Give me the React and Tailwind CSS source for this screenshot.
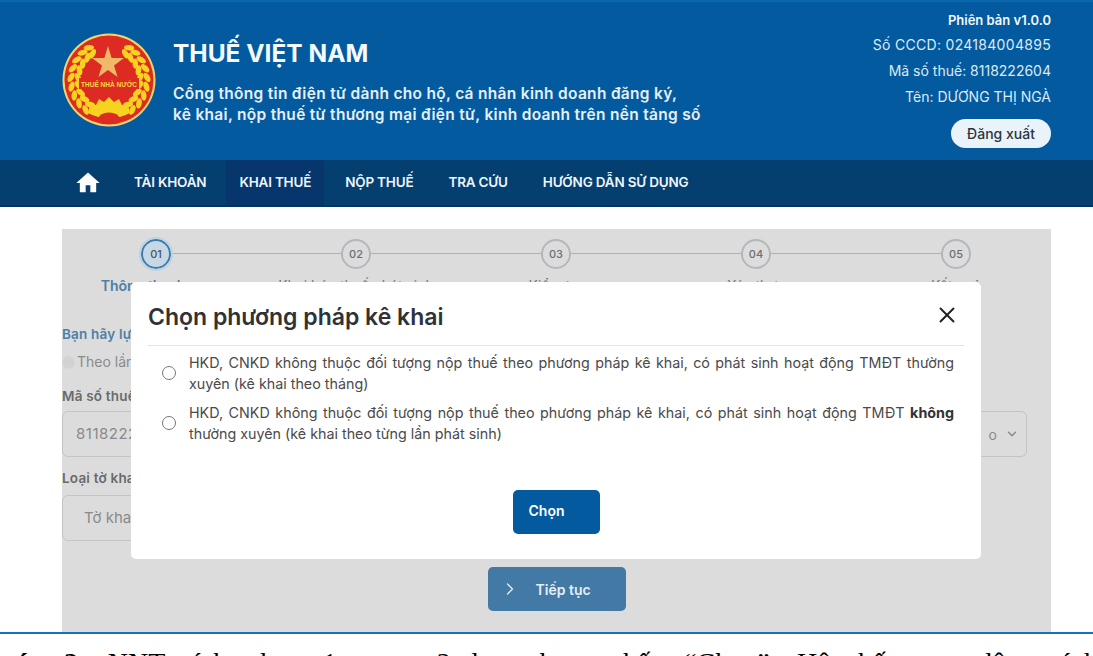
import { X, ChevronRight, ChevronDown } from 'lucide-react';
import { MdHome } from 'react-icons/md';

const STEPS = [
  { no: '01', label: 'Thông tin chung' },
  { no: '02', label: 'Khai báo thuế phát sinh' },
  { no: '03', label: 'Kiểm tra' },
  { no: '04', label: 'Xác thực' },
  { no: '05', label: 'Kết quả' },
];

const MENU = ['TÀI KHOẢN', 'KHAI THUẾ', 'NỘP THUẾ', 'TRA CỨU', 'HƯỚNG DẪN SỬ DỤNG'];

function Logo() {
  // hai bông lúa chạy từ đáy lên đỉnh huy hiệu
  const angles = [128, 142, 156, 170, 184, 198, 212, 226, 238];
  return (
    <svg viewBox="0 0 94 94" className="w-[94px] h-[94px] shrink-0">
      <circle cx="47" cy="47" r="46.5" fill="#f3d568" />
      <circle cx="47" cy="47" r="44.5" fill="#dd2a22" />
      {angles.map((a) => {
        const rad = (Math.PI / 180) * a;
        const rows = [
          { r: 31, tilt: -28 },
          { r: 38, tilt: 28 },
        ];
        return rows.map(({ r, tilt }) => {
          const x = 47 + r * Math.cos(rad);
          const y = 47 + r * Math.sin(rad);
          return (
            <g key={`${a}-${r}`}>
              <ellipse cx={x} cy={y} rx="5.2" ry="2.8" fill="#f7d321" transform={`rotate(${a + 90 + tilt} ${x} ${y})`} />
              <ellipse cx={94 - x} cy={y} rx="5.2" ry="2.8" fill="#f7d321" transform={`rotate(${-(a + 90 + tilt)} ${94 - x} ${y})`} />
            </g>
          );
        });
      })}
      <rect x="17" y="45" width="60" height="11" fill="#dd2a22" />
      <polygon
        points="46,13 49.6,25 62,25 52,32.5 55.6,44 46,37 36.4,44 40,32.5 30,25 42.4,25"
        fill="#f1b967"
      />
      <text x="47" y="54" textAnchor="middle" fontSize="7" fontWeight="700" fill="#f8dc45" textLength="56" lengthAdjust="spacingAndGlyphs" fontFamily="Liberation Sans, sans-serif">
        THUẾ NHÀ NƯỚC
      </text>
      <path d="M26 80 L28 71 L34 72 L37 66 L42 69 L47 64 L52 69 L57 66 L60 72 L66 71 L68 80 A44 44 0 0 1 26 80Z" fill="#f7d321" />
      <path d="M35 87 A13 12 0 0 1 59 87 A44 44 0 0 1 35 87Z" fill="#dd2a22" />
    </svg>
  );
}

function Header() {
  return (
    <header className="h-[160px] bg-[#045a9f] border-t-2 border-[#0a67ae] flex justify-between pl-[62px] pr-[42px] text-white">
      <div className="flex items-start gap-[17px] pt-[31px]">
        <Logo />
        <div className="pt-[3px]">
          <h1 className="text-[24.5px] leading-[34px] font-bold text-[#f4fafe]">THUẾ VIỆT NAM</h1>
          <p className="mt-[13px] text-[15.5px] leading-[21px] font-semibold tracking-[0.3px] text-[#e4f0f8]">
            Cổng thông tin điện tử dành cho hộ, cá nhân kinh doanh đăng ký,
            <br />
            kê khai, nộp thuế từ thương mại điện tử, kinh doanh trên nền tảng số
          </p>
        </div>
      </div>
      <div className="flex flex-col items-end pt-[8px] text-[14px] leading-[26px] text-[#dcebf5]">
        <div className="font-semibold text-[13px] text-[#f2f8fc] leading-[20px]">Phiên bản v1.0.0</div>
        <div className="leading-[27px] mt-[1px] tracking-[0.3px]">Số CCCD: 024184004895</div>
        <div>Mã số thuế: 8118222604</div>
        <div>Tên: DƯƠNG THỊ NGÀ</div>
        <button className="mt-[9px] w-[100px] h-[29px] rounded-full bg-[#eaf3fa] text-[#2c3440] text-[14px] font-medium">
          Đăng xuất
        </button>
      </div>
    </header>
  );
}

function Nav() {
  return (
    <nav className="h-[47px] bg-[#053f70] border-b-2 border-[#03345e] flex items-stretch pl-[74px] text-[#eef5fa] text-[13.5px] font-semibold tracking-[-0.2px]">
      <div className="flex items-center w-[60px]">
        <MdHome size={28} color="#ffffff" />
      </div>
      {MENU.map((m, i) => (
        <div
          key={m}
          className={
            i === 1
              ? 'flex items-center px-[13px] bg-[#07366c] mr-[21px]'
              : i === 0
                ? 'flex items-center mr-[20px]'
                : 'flex items-center mr-[35px]'
          }
        >
          {m}
        </div>
      ))}
    </nav>
  );
}

function Stepper() {
  return (
    <div className="relative grid grid-cols-5 pt-[10px] w-[1000px] -ml-[6px]">
      <div className="absolute left-[100px] right-[100px] top-[24px] h-[1px] bg-[#aeb2b5]" />
      {STEPS.map((s, i) => (
        <div key={s.no} className="relative flex flex-col items-center">
          <div
            className={
              i === 0
                ? 'w-[30px] h-[30px] rounded-full border-[2px] border-[#3d7ca9] bg-[#c6d8e6] outline-2 outline-[#bcd3e4] flex items-center justify-center text-[11px] font-medium text-[#4a5560]'
                : 'w-[30px] h-[30px] rounded-full border-[2px] border-[#b4b8bb] bg-[#dcdcdc] flex items-center justify-center text-[11px] font-medium text-[#6a6f73]'
            }
          >
            {s.no}
          </div>
          <div className={i === 0 ? 'mt-[6px] text-[14px] font-semibold text-[#4c80a6]' : 'mt-[6px] text-[14px] text-[#777]'}>
            {s.label}
          </div>
        </div>
      ))}
    </div>
  );
}

function BehindForm() {
  return (
    <div className="mt-[29px] pr-[24px] text-[#777]">
      <div className="text-[13.5px] leading-[18px] font-semibold tracking-[0.2px] text-[#4c80a6]">Bạn hãy lựa chọn</div>
      <div className="mt-[10px] flex items-center gap-[2px] text-[14px] leading-[18px] text-[#8a8a8a]">
        <span className="w-[13px] h-[13px] rounded-full bg-[#d2d2d2] border border-[#d6d6d6]" />
        Theo lần phát sinh
      </div>
      <div className="mt-[16px] text-[13.5px] leading-[18px] font-semibold tracking-[0.2px] text-[#6a6a6a]">Mã số thuế</div>
      <div className="mt-[6px] grid grid-cols-[1fr_200px] gap-[20px]">
        <div className="h-[46px] rounded-[6px] border border-[#c4c4c4] flex items-center pl-[13px] text-[15px] tracking-[0.5px] text-[#8a8a8a]">
          8118222604
        </div>
        <div className="h-[46px] rounded-[6px] border border-[#c4c4c4] flex items-center justify-end pr-[7px] gap-[8px] text-[14px] text-[#8a8a8a]">
          o
          <ChevronDown size={14} strokeWidth={2.5} />
        </div>
      </div>
      <div className="mt-[12px] text-[13.5px] leading-[18px] font-semibold tracking-[0.2px] text-[#6a6a6a]">Loại tờ khai</div>
      <div className="mt-[8px] w-[300px] h-[46px] rounded-[6px] border border-[#c4c4c4] flex items-center pl-[21px] text-[15px] text-[#8a8a8a]">
        Tờ khai
      </div>
      <div className="mt-[26px] flex justify-center pl-[24px]">
        <button className="w-[138px] h-[44px] rounded-[5px] bg-[#4379a5] text-[#e6eef5] text-[14px] font-semibold flex items-center pl-[12px] gap-[16px]">
          <ChevronRight size={20} strokeWidth={1.5} />
          Tiếp tục
        </button>
      </div>
    </div>
  );
}

function Option({ children }) {
  return (
    <label className="flex items-center gap-[13px] pl-[31px] pr-[27px]">
      <span className="w-[14px] h-[14px] rounded-full border border-[#777] bg-white shrink-0" />
      <span className="text-[14.3px] leading-[21px] text-[#4a4a4a] text-justify">{children}</span>
    </label>
  );
}

function Modal() {
  return (
    <div className="absolute left-[69px] top-[53px] w-[850px] h-[277px] bg-white rounded-[5px] flex flex-col">
      <div className="mx-[17px] h-[64px] flex items-center justify-between border-b border-[#e4e4e4] pt-[8px] pr-[4px]">
        <h2 className="text-[23px] font-semibold text-[#2f3338]">Chọn phương pháp kê khai</h2>
        <X size={26} strokeWidth={1.8} className="text-[#222] mb-[6px]" />
      </div>
      <div className="mt-[6px] flex flex-col gap-[8px]">
        <Option>
          HKD, CNKD không thuộc đối tượng nộp thuế theo phương pháp kê khai, có phát sinh hoạt động TMĐT thường xuyên (kê khai theo tháng)
        </Option>
        <Option>
          HKD, CNKD không thuộc đối tượng nộp thuế theo phương pháp kê khai, có phát sinh hoạt động TMĐT <b className="font-bold text-[#333]">không</b> thường xuyên (kê khai theo từng lần phát sinh)
        </Option>
      </div>
      <div className="mt-auto mb-[25px] flex justify-center">
        <button className="w-[87px] h-[44px] rounded-[5px] bg-[#045a9f] text-white text-[14px] font-semibold text-left pl-[16px] pb-[4px]">
          Chọn
        </button>
      </div>
    </div>
  );
}

export default function App() {
  return (
    <div className="w-[1093px] h-[656px] overflow-hidden bg-white font-['Inter','Noto_Sans',sans-serif]">
      <Header />
      <Nav />
      <main className="h-[425px] pl-[62px] pr-[42px] pt-[22px]">
        <div className="relative h-[403px] bg-[#dcdcdc] overflow-hidden">
          <Stepper />
          <BehindForm />
          <Modal />
        </div>
      </main>
      <div className="border-t-2 border-[#1272bd] whitespace-nowrap -ml-[20px] pt-[15px] font-['Liberation_Serif',serif] text-[28px] leading-[28px] [word-spacing:13.5px] text-black">
        <b>Bước 2:</b> NNT tích chọn 1 trong 2 lựa chọn, nhấn “Chọn”. Hệ thống tự động tính
      </div>
    </div>
  );
}
